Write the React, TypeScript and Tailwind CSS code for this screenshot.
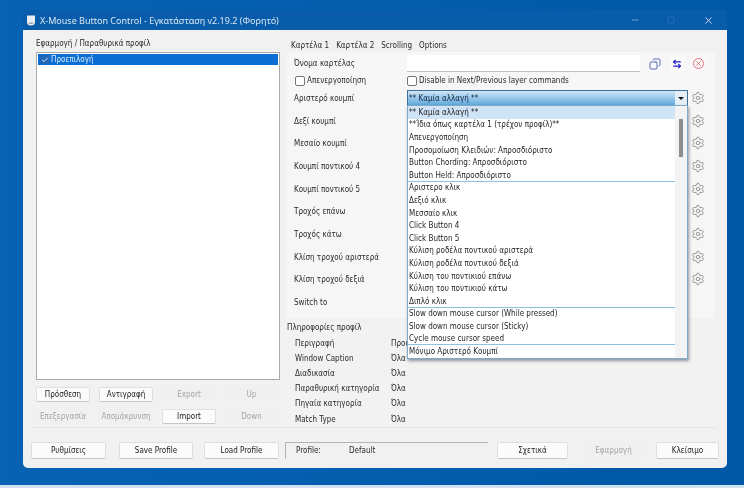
import { Settings, Check, X, Minus, Square, ArrowLeftRight, Copy } from "lucide-react";

const FONT = "[font-family:'DejaVu_Sans_Condensed','Liberation_Sans',sans-serif]";

function Btn({ label, w, off, h = "h-[15px]" }: { label: string; w: string; off?: boolean; h?: string }) {
  return (
    <div
      className={
        off
          ? `${w} ${h} flex items-center justify-center whitespace-nowrap rounded-[2px] bg-[#f0f0f0] text-[#a4a4a4]`
          : `${w} ${h} flex items-center justify-center whitespace-nowrap rounded-[2px] border border-[#dfdfdf] border-b-[#c6c6c6] bg-[#fbfbfb] text-[#222]`
      }
    >
      {label}
    </div>
  );
}

function Row({ label, gear = true }: { label: string; gear?: boolean }) {
  return (
    <div className="flex h-[22.7px] items-center">
      <span className="w-[113px] shrink-0 whitespace-nowrap pl-[7px] pt-[2px]">{label}</span>
      <div className="flex-1" />
      {gear && <Settings size={14} strokeWidth={1.6} className="mr-[10px] text-[#8f8f8f]" />}
    </div>
  );
}

const groups = [
  ["** Καμία αλλαγή **", "**Ίδια όπως καρτέλα 1 (τρέχον προφίλ)**", "Απενεργοποίηση", "Προσομοίωση Κλειδιών: Απροσδιόριστο", "Button Chording: Απροσδιόριστο", "Button Held: Απροσδιόριστο"],
  ["Αριστερο κλικ", "Δεξιό κλικ", "Μεσσαίο κλικ", "Click Button 4", "Click Button 5", "Κύλιση ροδέλα ποντικού αριστερά", "Κύλιση ροδέλα ποντικού δεξιά", "Κύλιση του ποντικιού επάνω", "Κύλιση του ποντικιού κάτω", "Διπλό κλικ"],
  ["Slow down mouse cursor (While pressed)", "Slow down mouse cursor (Sticky)", "Cycle mouse cursor speed"],
  ["Μόνιμο Αριστερό Κουμπί"],
];

function Dropdown() {
  return (
    <div className="absolute left-0 top-[15px] z-10 flex w-[281px] border border-[#7fa9c9] bg-white shadow-[1px_2px_3px_rgba(60,70,90,0.55)]">
      <div className="w-[267px]">
        {groups.map((g, i) => (
          <div key={i} className={i < groups.length - 1 ? "shadow-[inset_0_-1px_0_#8fc0e0]" : ""}>
            {g.map((t, j) => (
              <div
                key={t}
                className={
                  i === 0 && j === 0
                    ? "flex h-[12.6px] items-center whitespace-nowrap bg-[#d0e4f8] pl-px pt-px text-[#1a1a1a]"
                    : "flex h-[12.6px] items-center whitespace-nowrap pl-px pt-px text-[#1f1f1f]"
                }
              >
                {t}
              </div>
            ))}
          </div>
        ))}
      </div>
      <div className="flex flex-1 justify-center bg-[#f3f3f3] pt-[13px]">
        <div className="h-[38px] w-[4px] bg-[#8c8c8c]" />
      </div>
    </div>
  );
}

export default function App() {
  return (
    <div className={`${FONT} flex h-[488px] w-[744px] flex-col bg-gradient-to-r from-[#0862b4] to-[#0058a6] text-[8px] leading-none text-[#2a2a2a] blur-[0.3px]`}>
      <div className="flex flex-1 flex-col pl-[23px] pr-[17px] pt-[10px]">
        <div className="flex h-[20px] shrink-0 items-center bg-[#085ca9] pl-[3px] text-[9px] text-[#dbe6f2] [font-family:'Noto_Sans',sans-serif]">
          <svg width="10" height="12" viewBox="0 0 10 12" className="mr-[4px]">
            <path d="M1 1.5h8v6.5a4 3.5 0 0 1-8 0z" fill="#e8ecf0" />
            <path d="M3 8.5h4v1.5H3z" fill="#9aa6b2" />
          </svg>
          <span className="flex-1">X-Mouse Button Control - Εγκατάσταση v2.19.2 (Φορητό)</span>
          <Minus size={10} className="mr-[27px] text-[#7fb0dc]" />
          <Square size={8} className="mr-[28px] text-[#2f79bf]" />
          <X size={11} className="mr-[13px] text-[#d5e4f2]" />
        </div>

        <div className="flex h-[438px] w-[704px] shrink-0 flex-col rounded-b-[5px] bg-[#f1f1f1] px-[8px] pt-[9px]">
          <div className="flex h-[389px] shrink-0 gap-[2px]">
            {/* left */}
            <div className="flex w-[254px] shrink-0 flex-col border-b border-[#e4e4e4] px-[5px]">
              <div className="h-[13px] whitespace-nowrap pt-px">Εφαρμογή / Παραθυρικά προφίλ</div>
              <div className="h-[328px] border border-[#a9a9a9] bg-white p-px">
                <div className="flex h-[11px] items-center bg-[#0a6ed4] text-[#dcebfa]">
                  <span className="ml-[2px] mr-[1px] flex h-[9px] w-[10px] items-center justify-center bg-[#1f66b8]">
                    <Check size={8} strokeWidth={2.5} className="text-white" />
                  </span>
                  Προεπιλογή
                </div>
              </div>
              <div className="mt-[7px] flex gap-[9px]">
                <Btn label="Πρόσθεση" w="w-[54px]" />
                <Btn label="Αντιγραφή" w="w-[54px]" />
                <Btn label="Export" w="w-[54px]" off />
                <Btn label="Up" w="w-[53px]" off />
              </div>
              <div className="mt-[7px] flex gap-[9px]">
                <Btn label="Επεξεργασία" w="w-[54px]" off />
                <Btn label="Απομάκρυνση" w="w-[54px]" off />
                <Btn label="Import" w="w-[54px]" />
                <Btn label="Down" w="w-[53px]" off />
              </div>
            </div>

            {/* right */}
            <div className="flex w-[428px] shrink-0 flex-col">
              <div className="flex h-[13px] gap-[7px] pl-[4px] pt-[3px]">
                <span>Καρτέλα 1</span>
                <span>Καρτέλα 2</span>
                <span>Scrolling</span>
                <span>Options</span>
              </div>
              <div className="flex h-[266px] flex-col bg-[#f6f6f6] pt-[3px]">
                <div className="flex h-[17px] items-center">
                  <span className="w-[120px] whitespace-nowrap pl-[7px] pt-px">Όνομα καρτέλας</span>
                  <div className="h-[17px] w-[233px] border-b border-[#c2c2c2] bg-white" />
                  <div className="ml-[7px] flex h-[17px] w-[15px] items-center justify-center rounded-[2px] bg-[#f8f8fc]">
                    <Copy size={12} className="-scale-x-100 text-[#5a6cb0]" />
                  </div>
                  <div className="ml-[7px] flex h-[17px] w-[15px] items-center justify-center rounded-[2px] bg-[#fafafa]">
                    <ArrowLeftRight size={10} strokeWidth={2.8} className="text-[#1a1ac8]" />
                  </div>
                  <div className="ml-[6px] flex h-[17px] w-[16px] items-center justify-center rounded-[2px] bg-[#fbf6f7]">
                    <span className="flex h-[11px] w-[11px] items-center justify-center rounded-full border border-[#e07880]">
                      <X size={7} strokeWidth={2.5} className="text-[#d9505a]" />
                    </span>
                  </div>
                </div>
                <div className="mt-px flex h-[15px] items-center pl-[8px]">
                  <span className="mr-[2px] h-[10px] w-[10px] rounded-[2px] border border-[#777] bg-white" />
                  <span className="w-[100px] whitespace-nowrap pt-px">Απενεργοποίηση</span>
                  <span className="mr-[2px] h-[10px] w-[10px] rounded-[2px] border border-[#777] bg-white" />
                  <span className="whitespace-nowrap pt-px">Disable in Next/Previous layer commands</span>
                </div>
                <div className="relative -mt-[1.4px]">
                  <div className="absolute left-[120px] top-[3.4px] z-10 w-[281px]">
                    <div className="flex h-[16px] items-center justify-between border border-[#3f6f99] bg-gradient-to-b from-[#cfe6f7] to-[#5fa9dc] pl-px text-[#10233a]">
                      <span className="pt-[2px]">** Καμία αλλαγή **</span>
                      <span className="flex h-[14px] w-[12px] items-center justify-center bg-[#e4eef6]">
                        <span className="h-0 w-0 border-x-[3px] border-t-[3px] border-x-transparent border-t-[#111]" />
                      </span>
                    </div>
                    <Dropdown />
                  </div>
                  <Row label="Αριστερό κουμπί" />
                  <Row label="Δεξί κουμπί" />
                  <Row label="Μεσαίο κουμπί" />
                  <Row label="Κουμπί ποντικού 4" />
                  <Row label="Κουμπί ποντικού 5" />
                  <Row label="Τροχός επάνω" />
                  <Row label="Τροχός κάτω" />
                  <Row label="Κλίση τροχού αριστερά" />
                  <Row label="Κλίση τροχού δεξιά" />
                  <Row label="Switch to" gear={false} />
                </div>
              </div>
              <div className="mt-[4px] flex-1 border-b border-[#e4e4e4] bg-[#f2f2f2]">
                <div className="h-[13px] pt-[2px]">Πληροφορίες προφίλ</div>
                {[
                  ["Περιγραφή", "Προφίλ"],
                  ["Window Caption", "Όλα"],
                  ["Διαδικασία", "Όλα"],
                  ["Παραθυρική κατηγορία", "Όλα"],
                  ["Πηγαία κατηγορία", "Όλα"],
                  ["Match Type", "Όλα"],
                ].map(([a, b]) => (
                  <div key={a} className="flex h-[15.2px] items-center pl-[8px] pt-[2px]">
                    <span className="w-[96px] whitespace-nowrap">{a}</span>
                    <span>{b}</span>
                  </div>
                ))}
              </div>
            </div>
          </div>

          {/* bottom */}
          <div className="mt-[14px] flex h-[17px] items-stretch">
            <Btn label="Ρυθμίσεις" w="w-[75px]" h="h-[17px]" />
            <div className="w-[13px]" />
            <Btn label="Save Profile" w="w-[74px]" h="h-[17px]" />
            <div className="w-[11px]" />
            <Btn label="Load Profile" w="w-[75px]" h="h-[17px]" />
            <div className="w-[6px]" />
            <div className="flex w-[203px] items-center border-l border-t border-[#b5b5b5] pl-[10px]">
              <span className="w-[53px]">Profile:</span>
              <span>Default</span>
            </div>
            <div className="w-[9px]" />
            <Btn label="Σχετικά" w="w-[71px]" h="h-[17px]" />
            <div className="w-[14px]" />
            <Btn label="Εφαρμογή" w="w-[63px]" h="h-[17px]" off />
            <div className="w-[11px]" />
            <Btn label="Κλείσιμο" w="w-[63px]" h="h-[17px]" />
          </div>
        </div>
      </div>
      <div className="h-[3px] shrink-0 bg-[#cfe0f0]" />
    </div>
  );
}
